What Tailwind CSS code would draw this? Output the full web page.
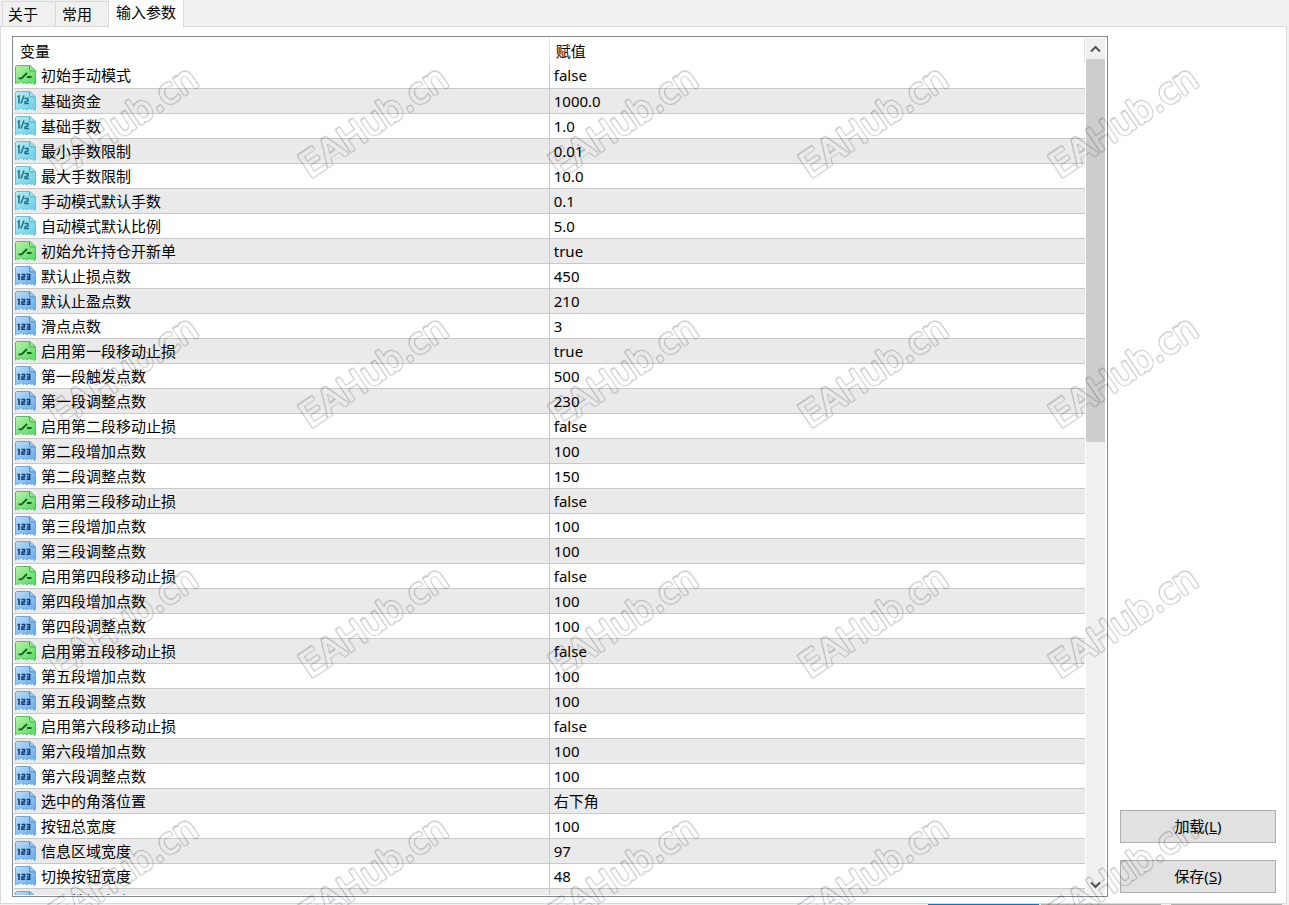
<!DOCTYPE html>
<html lang="zh-CN">
<head>
<meta charset="utf-8">
<title>输入参数</title>
<script src="https://cdn.jsdelivr.net/npm/@tailwindcss/browser@4"></script>
</head>
<body class="relative flex h-screen flex-col overflow-hidden bg-[#f0f0f0] font-['Noto_Sans','Noto_Sans_CJK_SC',sans-serif] text-[15px] leading-6 text-black">

<svg class="absolute h-0 w-0" aria-hidden="true">
  <defs>
    <linearGradient id="green" x1="0" y1="0" x2="1" y2="1"><stop offset="0" stop-color="#b4f5a6"/><stop offset="1" stop-color="#55d864"/></linearGradient>
    <linearGradient id="cyan" x1="0" y1="0" x2="1" y2="1"><stop offset="0" stop-color="#b5effa"/><stop offset="1" stop-color="#68cbe2"/></linearGradient>
    <linearGradient id="blue" x1="0" y1="0" x2="1" y2="1"><stop offset="0" stop-color="#b9ddfb"/><stop offset="1" stop-color="#67a8e6"/></linearGradient>
    <path id="sheet" d="M1.500 .5H15L20.500 5.500V18.500L19 19.500L17.500 17.500L15.500 18.500L14 17L12 19L10 17.500L8 18.500L6 16.500L4 18.500L2.500 17.500L.5 19V1.500Z"/>
    <path id="fold" d="M14.500 1V4.500Q14.500 6 16 6H20"/>
    <symbol id="bool" viewBox="0 0 21 20">
      <use href="#sheet" fill="url(#green)" stroke="#58bd60"/><use href="#fold" fill="#8ee98b" stroke="#43ad50"/>
      <path d="M3.500 13.300H6.500L12 8M12 12H16.500" fill="none" stroke="#145f22" stroke-width="1.800"/>
    </symbol>
    <symbol id="real" viewBox="0 0 21 20">
      <use href="#sheet" fill="url(#cyan)" stroke="#6fbfd3"/><use href="#fold" fill="#9de0ee" stroke="#4fa9c0"/>
      <path d="M2.500 6L4 5V12.500M9 4.500L6 12.500M9.500 7.500H13V9.800L10 11V12.500H14" fill="none" stroke="#1f6f86" stroke-width="1.500"/>
    </symbol>
    <symbol id="int" viewBox="0 0 21 20">
      <use href="#sheet" fill="url(#blue)" stroke="#74a5d6"/><use href="#fold" fill="#93c4f0" stroke="#5089c4"/>
      <path d="M2.500 8.500H4V14M6.500 8.500H9.500V11H7V13.300H10M11.500 8.500H14.700V13.300H11.500M12 11H14.500" fill="none" stroke="#123e73" stroke-width="1.500"/>
    </symbol>
  </defs>
</svg>

<div role="tablist" class="flex h-[26px] shrink-0 items-end pl-0.5">
  <button role="tab" class="h-[25px] w-[53px] border-t border-l border-[#d9d9d9] pr-3 text-center leading-6">关于</button>
  <button role="tab" class="h-[25px] w-[53px] border-t border-l border-[#d9d9d9] pr-2.5 text-center leading-6">常用</button>
  <button role="tab" aria-selected="true" class="z-10 -mb-px h-[27px] w-[76px] border-r border-l border-[#d9d9d9] bg-white pb-1 text-center leading-6">输入参数</button>
</div>

<main class="mr-0.5 flex min-h-0 flex-1 gap-3 border border-[#d9d9d9] bg-white pt-[9px] pr-[10px] pb-1.5 pl-[11px]">
  <section class="flex min-w-0 flex-1 border border-[#828790] p-px">
    <div class="min-w-0 flex-1 overflow-hidden">
      <table class="w-full table-fixed border-collapse">
        <thead>
          <tr class="h-[25px]">
            <th scope="col" class="w-[calc(50%-2px)] border-r border-[#e2e2e2] p-0 pl-1.5 text-left font-normal">变量</th>
            <th scope="col" class="border-r border-[#e2e2e2] p-0 pl-1.5 text-left font-normal">赋值</th>
          </tr>
        </thead>
        <tbody id="params"></tbody>
      </table>
    </div>
    <div class="mr-px ml-px flex w-[19px] shrink-0 flex-col bg-[#f0f0f0]" role="scrollbar" aria-controls="params" aria-valuenow="0">
      <button aria-label="向上滚动" class="flex h-[21px] items-center justify-center"><svg width="11" height="8" viewBox="0 0 11 8"><path d="M1 6.500L5.500 2L10 6.500" fill="none" stroke="#555" stroke-width="2"/></svg></button>
      <div class="min-h-0 flex-1"><div class="h-[47%] bg-[#cdcdcd]"></div></div>
      <button aria-label="向下滚动" class="flex h-[21px] items-center justify-center"><svg width="11" height="8" viewBox="0 0 11 8"><path d="M1 1.500L5.500 6L10 1.500" fill="none" stroke="#555" stroke-width="2"/></svg></button>
    </div>
  </section>
  <aside class="flex w-[156px] shrink-0 flex-col justify-end gap-[17px] pb-1">
    <button class="h-[33px] border border-[#adadad] bg-[#e1e1e1] pb-0.5">加载(<u>L</u>)</button>
    <button class="h-[33px] border border-[#adadad] bg-[#e1e1e1] pb-0.5">保存(<u>S</u>)</button>
  </aside>
</main>
<footer class="flex h-px shrink-0 justify-end gap-2.5 pr-[7px]">
  <div class="flex gap-0.5"><button aria-label="确定" class="h-px w-[111px] bg-[#0078d7]"></button><button aria-label="取消" class="h-px w-[120px] bg-[#adadad]"></button></div>
  <button aria-label="重设" class="h-px w-[111px] bg-[#adadad]"></button>
</footer>

<svg class="pointer-events-none absolute inset-0 z-20 h-full w-full" aria-hidden="true" font-family="DejaVu Sans" font-size="35" stroke-linejoin="round">
  <mask id="hollow" maskUnits="userSpaceOnUse" x="0" y="0" width="100%" height="100%">
    <rect width="100%" height="100%" fill="#fff"/>
    <g id="cores" fill="#000" stroke="#000" stroke-width="1"></g>
  </mask>
  <g mask="url(#hollow)" opacity=".22"><g id="marks" fill="#000" stroke="#000" stroke-width="3"></g></g>
</svg>

<script>
const rows = [
  ['bool','初始手动模式','false'],['real','基础资金','1000.0'],['real','基础手数','1.0'],
  ['real','最小手数限制','0.01'],['real','最大手数限制','10.0'],['real','手动模式默认手数','0.1'],
  ['real','自动模式默认比例','5.0'],['bool','初始允许持仓开新单','true'],['int','默认止损点数','450'],
  ['int','默认止盈点数','210'],['int','滑点点数','3'],['bool','启用第一段移动止损','true'],
  ['int','第一段触发点数','500'],['int','第一段调整点数','230'],['bool','启用第二段移动止损','false'],
  ['int','第二段增加点数','100'],['int','第二段调整点数','150'],['bool','启用第三段移动止损','false'],
  ['int','第三段增加点数','100'],['int','第三段调整点数','100'],['bool','启用第四段移动止损','false'],
  ['int','第四段增加点数','100'],['int','第四段调整点数','100'],['bool','启用第五段移动止损','false'],
  ['int','第五段增加点数','100'],['int','第五段调整点数','100'],['bool','启用第六段移动止损','false'],
  ['int','第六段增加点数','100'],['int','第六段调整点数','100'],['int','选中的角落位置','右下角'],
  ['int','按钮总宽度','100'],['int','信息区域宽度','97'],['int','切换按钮宽度','48'],['int','平仓按钮宽度','']
];
document.getElementById('params').innerHTML = rows.map(([type, name, value]) => `
  <tr class="h-[25px] border-b border-[#c8c8c8] even:bg-[#eaeaea]">
    <td class="border-r border-[#c8c8c8] p-0"><div class="flex h-6 items-center gap-[5px] pl-px"><svg class="h-5 w-[21px]" aria-hidden="true"><use href="#${type}"/></svg><span>${name}</span></div></td>
    <td class="p-0 pl-1">${value}</td>
  </tr>`).join('');

for (let y = 179; y < innerHeight + 150; y += 250)
  for (let x = 60; x < innerWidth - 200; x += 250)
    for (const layer of ['marks', 'cores'])
      document.getElementById(layer).insertAdjacentHTML('beforeend', `<text transform="translate(${x} ${y}) rotate(-34)">EAHub.cn</text>`);
</script>
</body>
</html>
